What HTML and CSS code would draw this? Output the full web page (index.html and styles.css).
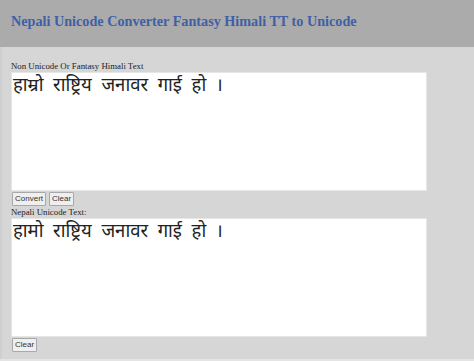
FILE: index.html
```html
<!DOCTYPE html>
<html>
<head>
<meta charset="utf-8">
<link rel="stylesheet" href="styles.css">
</head>
<body>
<header class="top">
  <h1 class="title">Nepali Unicode Converter Fantasy Himali TT to Unicode</h1>
</header>
<main class="panel">
  <div class="label">Non Unicode Or Fantasy Himali Text</div>
  <textarea class="box" spellcheck="false">हाम्रो  राष्ट्रिय  जनावर  गाई  हो  ।</textarea>
  <div class="buttons">
    <button class="btn">Convert</button>
    <button class="btn">Clear</button>
  </div>
  <div class="label">Nepali Unicode Text:</div>
  <textarea class="box" spellcheck="false">हामो  राष्ट्रिय  जनावर  गाई  हो  ।</textarea>
  <div class="buttons">
    <button class="btn">Clear</button>
  </div>
</main>
</body>
</html>
```
FILE: styles.css
```css
html, body {
  margin: 0;
  padding: 0;
  background: #e4e4e4;
}
body {
  width: 474px;
  height: 361px;
  overflow: hidden;
  font-family: "Liberation Serif", serif;
}
.top {
  background: #ababab;
  height: 47px;
  display: flex;
  align-items: center;
  padding-left: 11px;
  box-sizing: border-box;
}
.title {
  margin: 0;
  font-size: 14.2px;
  font-weight: bold;
  color: #3f5fa6;
  padding-bottom: 4px;
}
.panel {
  background: #d6d6d6;
  height: 312px;
  box-sizing: border-box;
  padding: 13px 0 0 9px;
  display: flex;
  flex-direction: column;
  border-left: 2px solid #cfcfcf;
}
.label {
  font-size: 8.8px;
  color: #222;
  line-height: 12px;
  height: 12px;
}
.box {
  width: 416px;
  height: 119px;
  box-sizing: border-box;
  border: 1px solid #e6e6e6;
  background: #fff;
  margin: 0;
  padding: 0 1px;
  font-family: "Noto Sans", "Lohit Devanagari", sans-serif;
  font-size: 18.5px;
  line-height: 22px;
  color: #222;
  resize: none;
  outline: none;
}
.buttons {
  display: flex;
  gap: 3px;
  padding: 1px 0 0 1px;
}
.btn {
  font-family: "Liberation Sans", Arial, sans-serif;
  font-size: 8px;
  color: #333;
  background: #efefef;
  border: 1px solid #a8a8a8;
  border-radius: 1px;
  padding: 1px 2px;
  height: 14px;
  line-height: 10px;
}
```
